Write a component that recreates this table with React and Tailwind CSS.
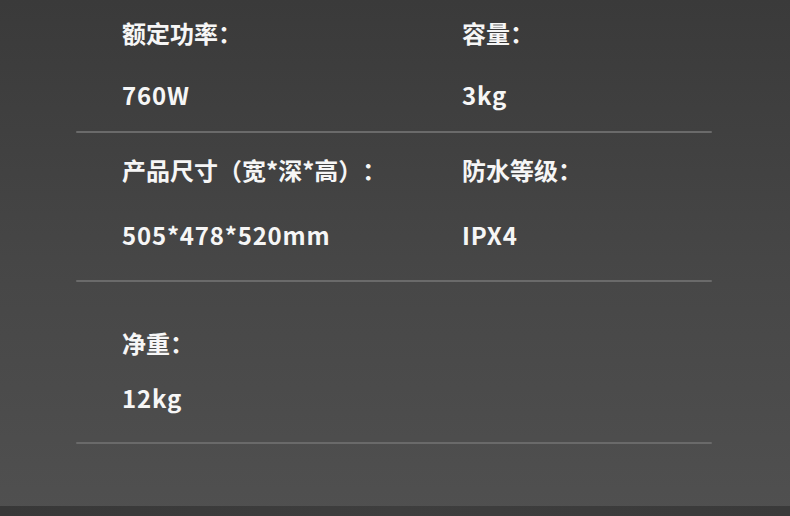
const specs = [
    {
        pad: 'pt-[17px]',
        gap: 'mt-[30px]',
        bottom: 'mt-[20px]',
        items: [
            { label: '额定功率：', value: '760W' },
            { label: '容量：', value: '3kg' },
        ],
    },
    {
        pad: 'pt-[21px]',
        gap: 'mt-[33px]',
        bottom: 'mt-[29px]',
        items: [
            { label: '产品尺寸（宽*深*高）：', value: '505*478*520mm' },
            { label: '防水等级：', value: 'IPX4' },
        ],
    },
    {
        pad: 'pt-[45px]',
        gap: 'mt-[23px]',
        bottom: 'mt-[28px]',
        items: [{ label: '净重：', value: '12kg' }],
    },
]

function Divider({ className }) {
    return (
        <div
            className={`${className} ml-[76px] h-[2px] w-[636px] rounded-full bg-[#6a6a6a]`}
        />
    )
}

export default function App() {
    return (
        <div
            className="flex h-[516px] w-[790px] flex-col overflow-hidden bg-gradient-to-b from-[#3a3a3a] via-[#464646] to-[#505050] text-[#f6f6f6] [text-spacing-trim:space-all]"
            style={{ fontFamily: '"Noto Sans CJK SC", "Noto Sans", sans-serif' }}
        >
            {specs.map((row, i) => (
                <div key={i} className={row.pad}>
                    <div className="grid grid-cols-[340px_1fr] pl-[122px] text-[24px] leading-[32px] font-bold">
                        {row.items.map((it) => (
                            <div key={it.label}>{it.label}</div>
                        ))}
                    </div>
                    <div className={`${row.gap} grid grid-cols-[340px_1fr] pl-[122px] text-[24px] leading-[32px] font-bold tracking-[0.8px]`}>
                        {row.items.map((it) => (
                            <div key={it.value}>{it.value}</div>
                        ))}
                    </div>
                    <Divider className={row.bottom} />
                </div>
            ))}

            {/* dark strip at the bottom */}
            <div className="mt-auto h-[10px] w-full bg-gradient-to-r from-[#383838] via-[#3e3e3e] to-[#3a3a3a]" />
        </div>
    )
}
